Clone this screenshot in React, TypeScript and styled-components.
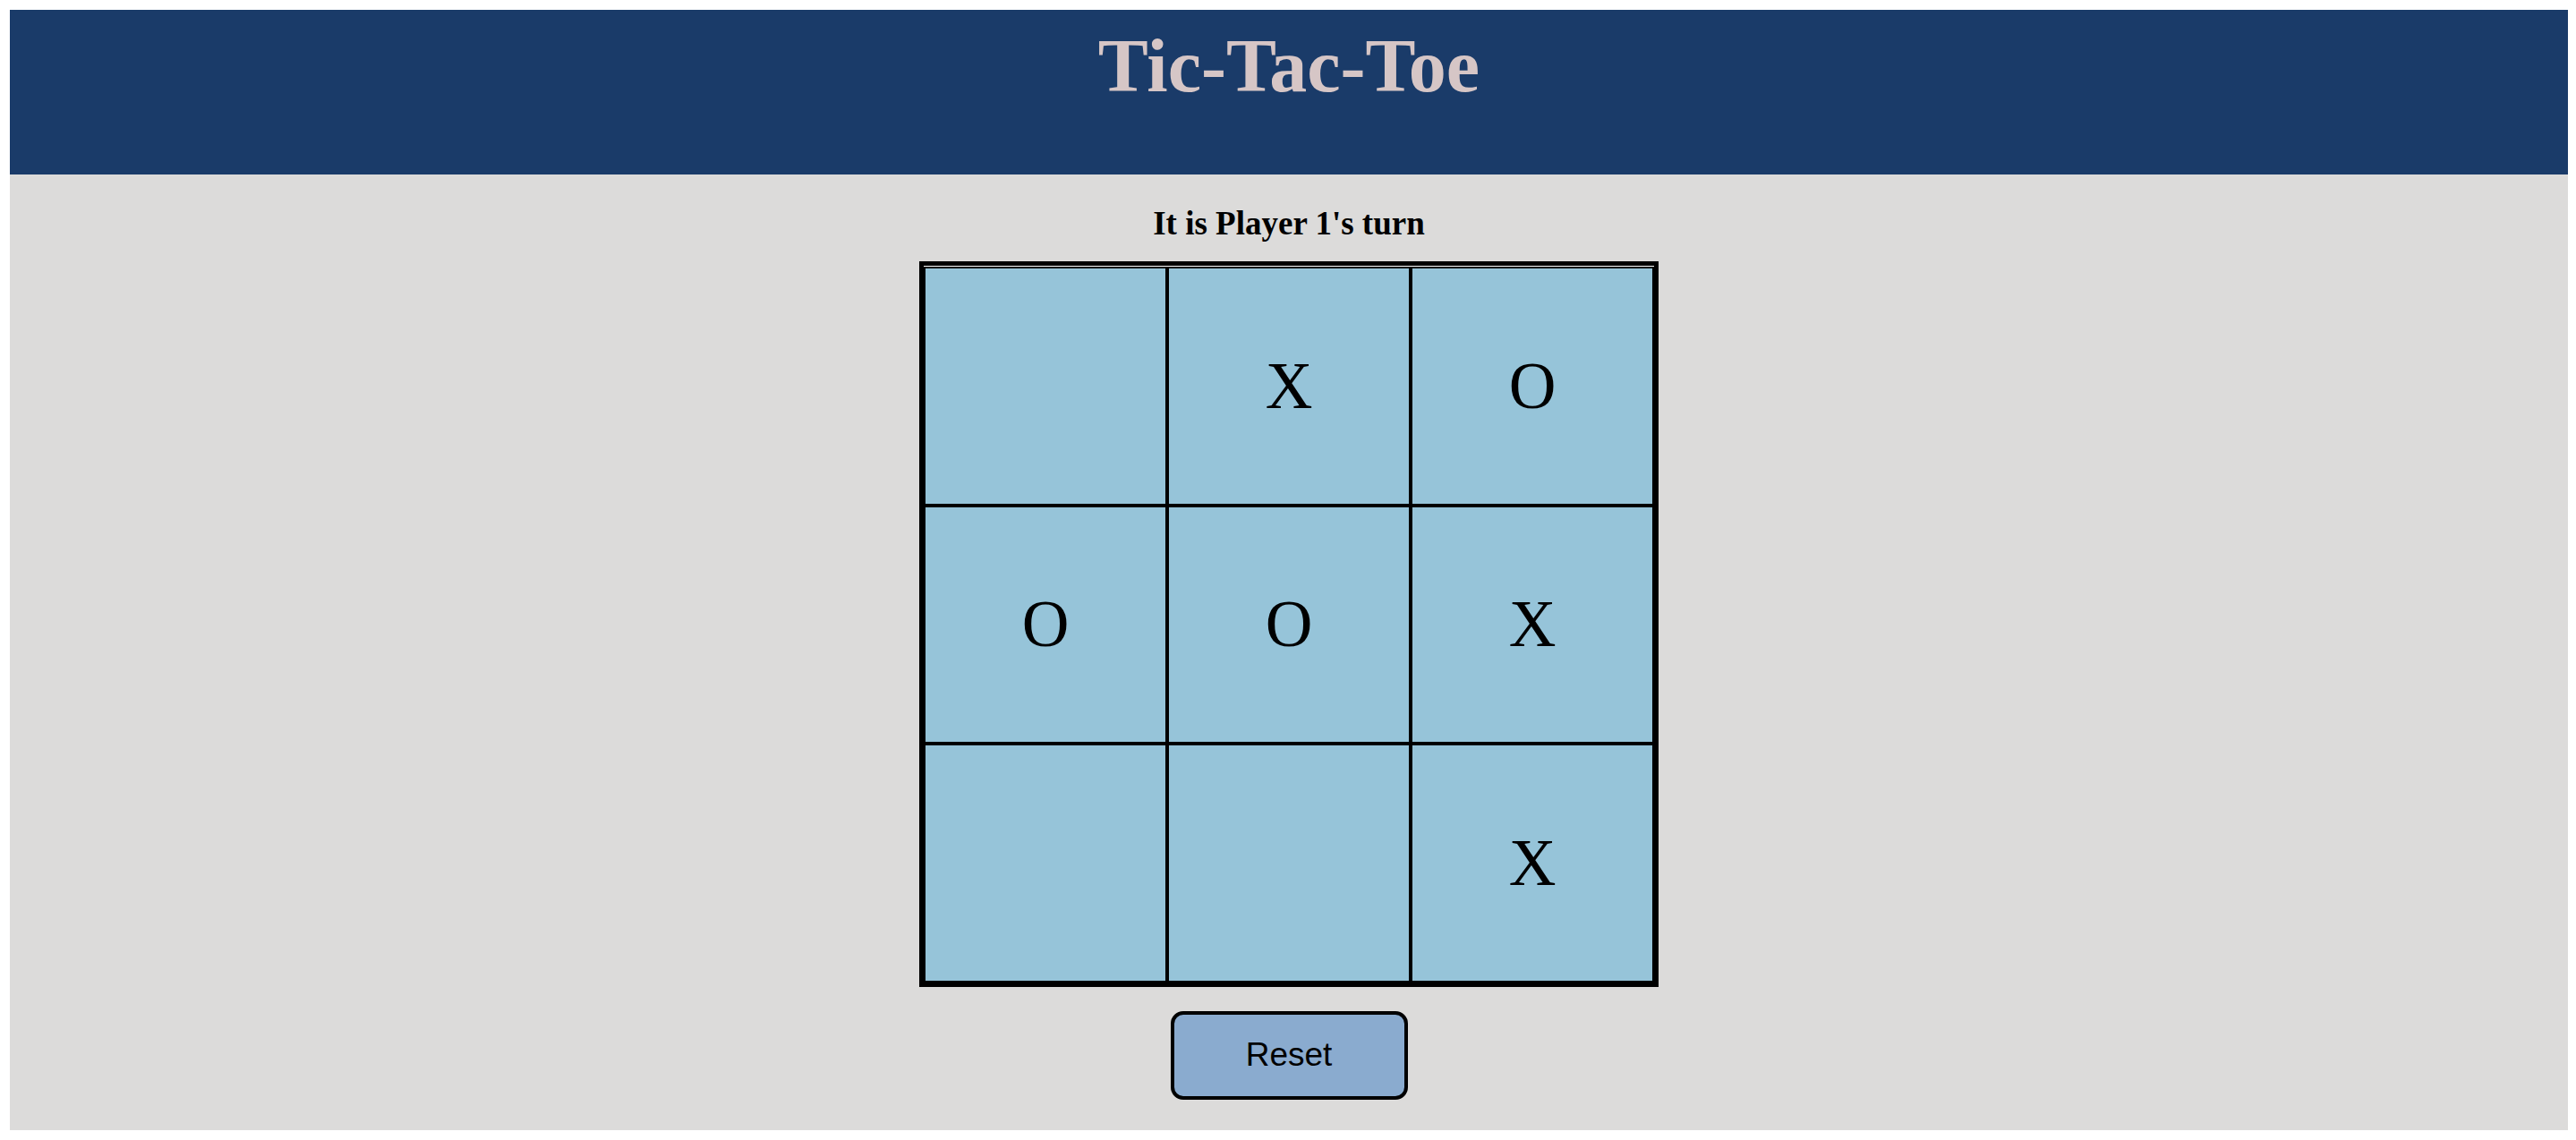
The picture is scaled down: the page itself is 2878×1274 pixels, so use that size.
import React, { useState } from "react";
import styled, { createGlobalStyle } from "styled-components";

const GlobalStyle = createGlobalStyle`
  html, body { background: #ffffff; }
  body {
    margin: 11px 9px 11px 11px;
    font-family: "Liberation Serif", "Times New Roman", serif;
  }
  * { box-sizing: border-box; }
`;

const Page = styled.div`
  min-height: calc(100vh - 22px);
  background: #dcdbda;
  display: flex;
  flex-direction: column;
  align-items: center;
`;

const Header = styled.header`
  align-self: stretch;
  height: 184px;
  background: #1a3b69;
  display: flex;
  justify-content: center;
  padding-top: 21px;
`;

const Title = styled.h1`
  margin: 0;
  font-family: "Liberation Serif", "Times New Roman", serif;
  font-weight: 700;
  font-size: 84px;
  line-height: 1;
  color: #d6c6c6;
`;

const Status = styled.h3`
  margin: 36px 0 24px;
  font-family: "Liberation Serif", "Times New Roman", serif;
  font-weight: 700;
  font-size: 37px;
  line-height: 1;
  color: #000;
`;

const Board = styled.div`
  display: grid;
  grid-template-columns: repeat(3, 272px);
  grid-template-rows: repeat(3, 266.67px);
  border: 5px solid #000;
  padding-top: 1px;
  background: #ffffff;
`;

const Cell = styled.button`
  border: 2px solid #000;
  background: #96c4d9;
  margin: 0;
  padding: 0;
  display: flex;
  align-items: center;
  justify-content: center;
  font-family: "Liberation Serif", "Times New Roman", serif;
  font-weight: 400;
  font-size: 73px;
  line-height: 1;
  color: #000;
  cursor: pointer;
`;

const ResetButton = styled.button`
  margin-top: 27px;
  width: 265px;
  height: 99px;
  border: 4px solid #000;
  border-radius: 14px;
  background: #8aabcf;
  font-family: "Liberation Sans", Arial, sans-serif;
  font-size: 37px;
  color: #000;
  cursor: pointer;
`;

const initial: string[] = ["", "X", "O", "O", "O", "X", "", "", "X"];

export default function App() {
  const [cells, setCells] = useState<string[]>(initial);
  const [turn, setTurn] = useState<number>(1);

  const play = (i: number) => {
    if (cells[i]) return;
    const next = [...cells];
    next[i] = turn === 1 ? "X" : "O";
    setCells(next);
    setTurn(turn === 1 ? 2 : 1);
  };

  return (
    <>
      <GlobalStyle />
      <Page>
        <Header>
          <Title>Tic-Tac-Toe</Title>
        </Header>
        <Status>It is Player {turn}'s turn</Status>
        <Board>
          {cells.map((c, i) => (
            <Cell key={i} onClick={() => play(i)}>
              {c}
            </Cell>
          ))}
        </Board>
        <ResetButton
          onClick={() => {
            setCells(Array(9).fill(""));
            setTurn(1);
          }}
        >
          Reset
        </ResetButton>
      </Page>
    </>
  );
}
